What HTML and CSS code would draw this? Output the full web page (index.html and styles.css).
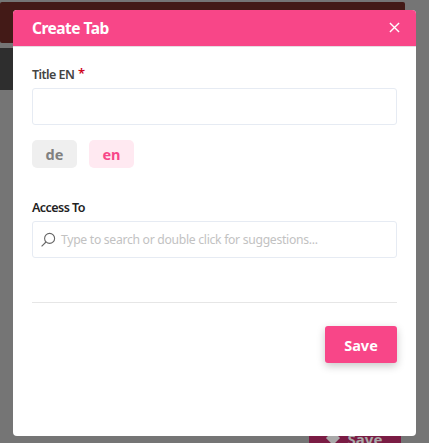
FILE: index.html
```html
<!DOCTYPE html>
<html lang="en">
<head>
<meta charset="utf-8">
<title>Create Tab</title>
<link rel="stylesheet" href="styles.css">
</head>
<body>
<div class="page">
  <div class="page-bar"></div>
  <div class="page-side"></div>
  <div class="page-save"><span class="page-save-mark"></span>Save</div>
</div>
<div class="modal">
  <header class="modal-head">
    <h1 class="modal-title">Create Tab</h1>
    <svg class="close" viewBox="0 0 12 12" aria-label="Close"><path d="M1 1l10 10M11 1L1 11"/></svg>
  </header>
  <div class="modal-body">
    <label class="label">Title EN <span class="req">*</span></label>
    <div class="input"></div>
    <div class="langs">
      <span class="chip">de</span>
      <span class="chip chip-on">en</span>
    </div>
    <label class="label label-access">Access To</label>
    <div class="input input-search">
      <svg class="search" viewBox="0 0 16 16"><circle cx="9.6" cy="6.4" r="5"/><path d="M6 10L1.6 14.4"/></svg>
      <span class="placeholder">Type to search or double click for suggestions...</span>
    </div>
    <hr class="rule">
    <div class="actions"><button class="save">Save</button></div>
  </div>
</div>
</body>
</html>
```
FILE: styles.css
```css
* { box-sizing: border-box; }
html, body { margin: 0; height: 100%; }
body {
  background: #757575;
  font-family: "Noto Sans", "Open Sans", sans-serif;
  overflow: hidden;
}
.page { position: relative; width: 429px; height: 443px; padding-top: 2px; }
.page-bar { width: 405px; height: 41px; background: #431a17; border-radius: 2px; }
.page-side { width: 13px; height: 42px; margin-top: 5px; background: #2e2e2e; }
.page-save {
  position: absolute; left: 309px; top: 430px; width: 92px; height: 13px;
  background: #7a1c44; color: #a9a9a9; font-size: 15px; font-weight: 700;
  display: flex; justify-content: center; gap: 10px; line-height: 18px;
}
.page-save-mark { width: 10px; height: 10px; margin-top: 3px; background: #a9a9a9; transform: rotate(45deg); }
.modal {
  position: absolute; left: 13px; top: 10px; width: 403px; height: 426px;
  background: #fff; border-radius: 4px; overflow: hidden;
}
.modal-head {
  height: 37px; background: #f84688; border-bottom: 1px solid #e5dde2;
  display: flex; align-items: center; justify-content: space-between;
  padding: 0 16px 1px 19px;
}
.modal-title { margin: 0; color: #fff; font-size: 15.5px; font-weight: 700; line-height: 20px; letter-spacing: -0.5px; }
.close { width: 11px; height: 11px; fill: none; stroke: #fff; stroke-width: 1.5; }
.modal-body { padding: 20px 19px 0; }
.label { display: block; font-size: 12.5px; font-weight: 600; line-height: 16px; color: #444; letter-spacing: -0.55px; }
.req { color: #d0021b; position: relative; top: -1px; left: 1px; font-size: 13px; line-height: 0; }
.input {
  height: 37px; margin-top: 5px; border: 1px solid #e6ebf3; border-radius: 3px; background: #fff;
}
.langs { display: flex; gap: 12px; margin-top: 15px; }
.chip {
  width: 45px; height: 28px; border-radius: 5px; background: #efefef; color: #808080;
  font-size: 14.5px; font-weight: 700; display: flex; align-items: center; justify-content: center;
}
.chip-on { background: #ffe9f1; color: #f84688; }
.label-access { margin-top: 32px; color: #222; }
.input-search { margin-top: 5px; display: flex; align-items: center; padding-left: 7px; gap: 5px; }
.search { width: 16px; height: 16px; fill: none; stroke: #666; stroke-width: 1.1; flex: none; }
.placeholder { font-size: 12.2px; color: #c2c2c2; white-space: nowrap; letter-spacing: -0.3px; }
.rule { border: 0; border-top: 1px solid #e6e6e6; margin: 44px 0 0; }
.actions { display: flex; justify-content: flex-end; margin-top: 23px; }
.save {
  width: 72px; height: 37px; border: 0; border-radius: 3px; background: #f84688; color: #fff;
  font: 700 14.5px "Noto Sans", "Open Sans", sans-serif;
  box-shadow: 0 3px 8px rgba(0,0,0,.22);
}
```
